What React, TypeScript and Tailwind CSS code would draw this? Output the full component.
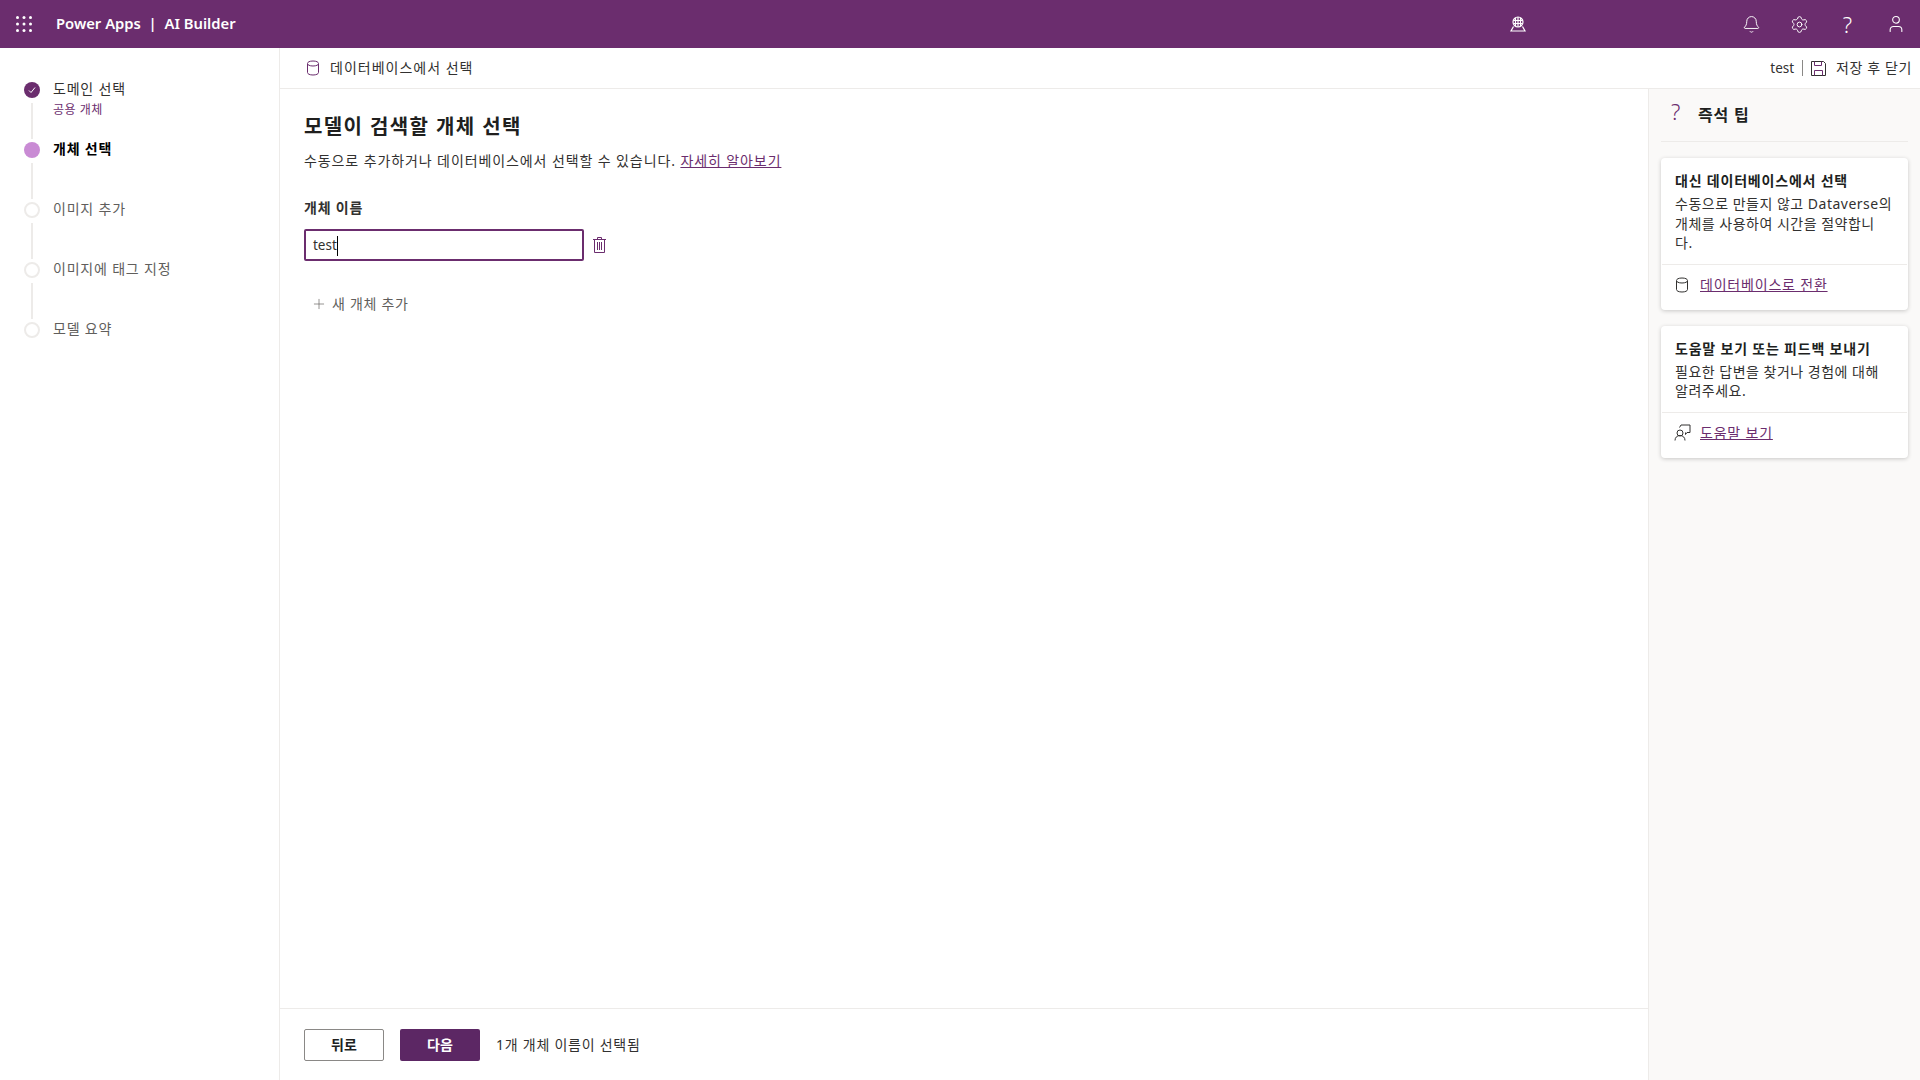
import { Bell, Plus, Settings, User } from "lucide-react";

const Waffle = () => (
  <svg width="16" height="16" viewBox="0 0 16 16" fill="white">
    {[1.5, 8, 14.5].map((y) =>
      [1.5, 8, 14.5].map((x) => <circle key={`${x}-${y}`} cx={x} cy={y} r="1.5" />)
    )}
  </svg>
);

const Cylinder = ({ className }: { className?: string }) => (
  <svg width="14" height="16" viewBox="0 0 14 16" fill="none" stroke="currentColor" className={className}>
    <path d="M1.5 4v8.500c0 1.400 2 2.500 5.500 2.500s5.500-1.100 5.500-2.500v-8.500" />
    <path d="M1.500 3.500c0-1.400 2-2.500 5.500-2.500s5.500 1.100 5.500 2.500-2 2.500-5.500 2.500-5.500-1.100-5.500-2.500z" />
  </svg>
);

const Environment = () => (
  <svg width="16" height="16" viewBox="0 0 16 16" fill="none" stroke="white" strokeWidth="1.2">
    <circle cx="8" cy="6" r="5" />
    <path d="M3.500 4.500h9M3.500 7.500h9M8 1v10M5.500 1.800v8.400M10.500 1.800v8.400" />
    <path d="M3.500 10.500l-2.500 4.500h14l-2.500-4.500" />
  </svg>
);

const Feedback = () => (
  <svg width="17" height="17" viewBox="0 0 17 17" fill="none" stroke="#323130" className="-mr-[2px] -ml-[1px]">
    <path d="M5.500 3.500l1.500-2.500h9v7.500h-3l-1.500 2v-2" />
    <circle cx="6" cy="9" r="3" />
    <path d="M1 16.500c0-3 2-5 5-5s5 2 5 5" />
  </svg>
);

const SaveIcon = () => (
  <svg width="15" height="15" viewBox="0 0 15 15" fill="none" stroke="#323130" className="shrink-0">
    <path d="M.5.500h12l2 2v12h-14z" />
    <path d="M3.500 14.500v-5h8v5M3.500.500v4h7v-4" stroke="#6b2d6e" />
  </svg>
);

const TrashIcon = () => (
  <svg width="13" height="16" viewBox="0 0 13 16" fill="none" stroke="#6b2d6e" className="ml-[9px] shrink-0">
    <path d="M0 2.500h13M4.500 2.500v-2h4v2M1.500 2.500v13h10v-13" />
    <path d="M4.500 5v8M6.500 5v8M8.500 5v8" />
  </svg>
);

const steps = [
  { label: "도메인 선택", sub: "공용 개체", state: "done" },
  { label: "개체 선택", state: "active" },
  { label: "이미지 추가", state: "todo" },
  { label: "이미지에 태그 지정", state: "todo" },
  { label: "모델 요약", state: "todo" },
];

const Step = ({ label, sub, state, last }: { label: string; sub?: string; state: string; last: boolean }) => (
  <div className="flex h-[60px] gap-[13px]">
    <div className="flex w-4 flex-col items-center">
      {state === "done" && (
        <div className="flex h-4 w-4 items-center justify-center rounded-full bg-[#6b2d6e]">
          <svg width="10" height="10" viewBox="0 0 10 10" fill="none" stroke="white" strokeWidth="1">
            <path d="M2 5.500l2 2 4-5" />
          </svg>
        </div>
      )}
      {state === "active" && <div className="h-4 w-4 rounded-full bg-[#c98bd4]" />}
      {state === "todo" && <div className="h-4 w-4 rounded-full border-2 border-[#edebe9]" />}
      {!last && <div className="mt-[5px] h-9 w-0.5 bg-[#edebe9]" />}
    </div>
    <div className="-mt-[2px]">
      <div
        className={
          "text-[14px] leading-[18px] tracking-[0.8px] " +
          (state === "active" ? "font-semibold text-black" : state === "done" ? "text-[#323130]" : "text-[#605e5c]")
        }
      >
        {label}
      </div>
      {sub && <div className="mt-[4px] text-[12px] leading-[15px] tracking-[0.5px] text-[#6b2d6e]">{sub}</div>}
    </div>
  </div>
);

const TipCard = ({
  title,
  lines,
  link,
  icon,
}: {
  title: string;
  lines: string[];
  link: string;
  icon: React.ReactNode;
}) => (
  <div className="rounded bg-white shadow-[0_1px_4px_rgba(0,0,0,0.2)]">
    <div className="px-[14px] pt-[13px] pb-[11px]">
      <div className="text-[14px] leading-[20px] font-semibold tracking-[0.8px] text-[#201f1e]">{title}</div>
      <div className="mt-[3px] text-[14px] leading-[19.500px] tracking-[0.5px] whitespace-nowrap text-[#323130]">
        {lines.map((l) => (
          <div key={l}>{l}</div>
        ))}
      </div>
    </div>
    <div className="mx-px flex h-[46px] items-center gap-[11px] border-t border-[#edebe9] px-[13px] pb-[5px]">
      {icon}
      <a className="text-[14px] tracking-[0.8px] text-[#6b2d6e] underline">{link}</a>
    </div>
  </div>
);

export default function App() {
  return (
    <div className="flex h-screen w-full flex-col overflow-hidden bg-white font-['Noto_Sans','Noto_Sans_CJK_KR',sans-serif] text-sm text-[#323130]">
      <header className="flex h-12 shrink-0 items-center bg-[#6b2d6e] pr-[14px] pl-4 text-white">
        <Waffle />
        <div className="ml-6 text-[14.800px] font-semibold">Power Apps&nbsp; |&nbsp; AI Builder</div>
        <div className="mr-[216px] ml-auto">
          <Environment />
        </div>
        <div className="flex items-center gap-[29px]">
          <Bell size={19} strokeWidth={1.200} />
          <Settings size={19} strokeWidth={1.200} />
          <span className="w-[19px] text-center text-[22px] leading-none font-light">?</span>
          <User size={20} strokeWidth={1.300} />
        </div>
      </header>

      <div className="flex min-h-0 flex-1">
        <nav className="w-[280px] shrink-0 border-r border-[#edebe9] pt-[34px] pl-6">
          {steps.map((s, i) => (
            <Step key={s.label} {...s} last={i === steps.length - 1} />
          ))}
        </nav>

        <div className="flex min-w-0 flex-1 flex-col">
          <div className="flex h-[41px] shrink-0 items-center border-b border-[#edebe9] pr-2 pl-[26px]">
            <Cylinder className="text-[#6b2d6e]" />
            <span className="-mt-[1px] ml-[10px] text-[14px] tracking-[1px]">데이터베이스에서 선택</span>
            <span className="mt-[2px] ml-auto text-[13.500px]">test</span>
            <span className="mx-2 h-4 w-px bg-[#8a8886]" />
            <SaveIcon />
            <span className="ml-[10px] text-[14px] tracking-[0.6px]">저장 후 닫기</span>
          </div>

          <div className="flex min-h-0 flex-1">
            <main className="flex min-w-0 flex-1 flex-col border-r border-[#edebe9]">
              <div className="flex-1 pt-[24px] pl-6">
                <h1 className="text-[20px] leading-[28px] font-bold tracking-[1.400px] text-[#201f1e]">
                  모델이 검색할 개체 선택
                </h1>
                <p className="mt-[10px] text-[14px] leading-[20px] tracking-[0.900px]">
                  수동으로 추가하거나 데이터베이스에서 선택할 수 있습니다.{" "}
                  <a className="text-[#6b2d6e] underline">자세히 알아보기</a>
                </p>
                <div className="mt-[27px] text-[14px] leading-[20px] font-semibold tracking-[0.800px]">개체 이름</div>
                <div className="mt-[11px] flex items-center">
                  <div className="flex h-[32px] w-[280px] items-center rounded-[2px] border-2 border-[#6b2d6e] pt-[2px] pl-[7px] text-[13.500px]">
                    tes<span className="border-r border-black">t</span>
                  </div>
                  <TrashIcon />
                </div>
                <div className="mt-[33px] flex items-center pl-[7px] text-[14px] leading-[20px] tracking-[0.700px] text-[#605e5c]">
                  <Plus size={16} strokeWidth={1} className="mr-[5px]" />새 개체 추가
                </div>
              </div>
              <footer className="flex h-[72px] shrink-0 items-center border-t border-[#edebe9] pl-6">
                <button className="h-8 w-20 rounded-[2px] border border-[#8a8886] bg-white text-[14px] font-semibold text-[#201f1e]">
                  뒤로
                </button>
                <button className="ml-4 h-8 w-20 rounded-[2px] bg-[#5c2764] text-[14px] font-semibold text-white">
                  다음
                </button>
                <span className="ml-[16px] text-[14px] tracking-[0.75px]">1개 개체 이름이 선택됨</span>
              </footer>
            </main>

            <aside className="w-[271px] shrink-0 bg-[#faf9f8] px-3">
              <div className="flex h-[53px] items-center gap-[15px] border-b border-[#edebe9] pl-[10px]">
                <span className="-mt-2 w-3 text-[22px] leading-none font-light text-[#6b2d6e]">?</span>
                <span className="text-[16px] font-semibold tracking-[0.800px] text-[#201f1e]">즉석 팁</span>
              </div>
              <div className="mt-4 flex flex-col gap-4">
                <TipCard
                  title="대신 데이터베이스에서 선택"
                  lines={["수동으로 만들지 않고 Dataverse의", "개체를 사용하여 시간을 절약합니", "다."]}
                  link="데이터베이스로 전환"
                  icon={<Cylinder />}
                />
                <TipCard
                  title="도움말 보기 또는 피드백 보내기"
                  lines={["필요한 답변을 찾거나 경험에 대해", "알려주세요."]}
                  link="도움말 보기"
                  icon={<Feedback />}
                />
              </div>
            </aside>
          </div>
        </div>
      </div>
    </div>
  );
}
